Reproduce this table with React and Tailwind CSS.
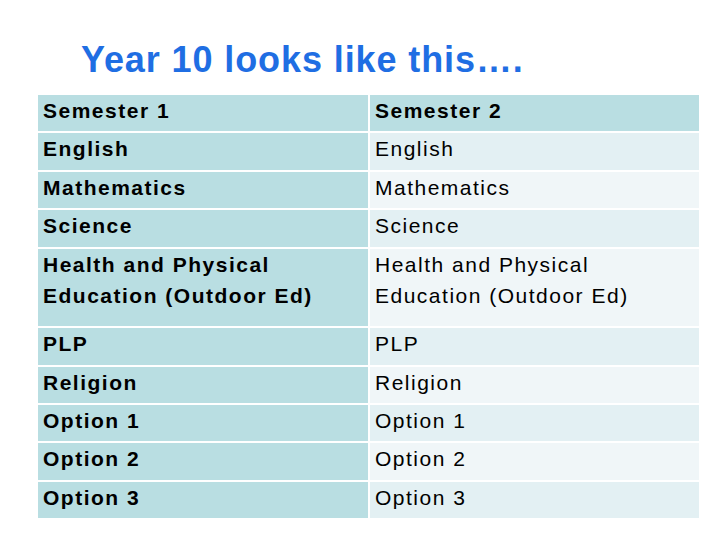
const rows = [
  { a: "English", b: "English" },
  { a: "Mathematics", b: "Mathematics" },
  { a: "Science", b: "Science" },
  { a: ["Health and Physical", "Education (Outdoor Ed)"], b: ["Health and Physical", "Education (Outdoor Ed)"], tall: true },
  { a: "PLP", b: "PLP" },
  { a: "Religion", b: "Religion" },
  { a: "Option 1", b: "Option 1" },
  { a: "Option 2", b: "Option 2" },
  { a: "Option 3", b: "Option 3" },
];

const Cell = ({ children, className }) => (
  <div className={`px-[5px] leading-[31px] text-[21px] tracking-[1.5px] text-black ${className}`}>
    {Array.isArray(children) ? children.map((line) => <div key={line}>{line}</div>) : children}
  </div>
);

export default function App() {
  return (
    <div className="w-[720px] h-[540px] bg-white overflow-hidden" style={{ fontFamily: '"Liberation Sans", Arial, sans-serif' }}>
      {/* Title */}
      <h1 className="pl-[81px] pt-[39px] h-[95px] text-[36px] leading-[42px] font-bold tracking-[0.9px] text-[#1f6ee3]">
        Year 10 looks like this….
      </h1>

      {/* Table */}
      <div className="ml-[38px] w-[661px] grid grid-cols-[330px_329px] gap-x-[2px] gap-y-[2px]">
        <Cell className="h-[36.4px] bg-[#b9dee2] font-bold">Semester 1</Cell>
        <Cell className="h-[36.4px] bg-[#b9dee2] font-bold">Semester 2</Cell>
        {rows.map((row, i) => (
          <div key={i} className="contents">
            <Cell className={`${row.tall ? "h-[77.6px]" : "h-[36.4px]"} bg-[#b9dee2] font-bold`}>{row.a}</Cell>
            <Cell className={`${row.tall ? "h-[77.6px]" : "h-[36.4px]"} ${i % 2 === 0 ? "bg-[#e3f0f3]" : "bg-[#f0f6f8]"}`}>{row.b}</Cell>
          </div>
        ))}
      </div>
    </div>
  );
}
